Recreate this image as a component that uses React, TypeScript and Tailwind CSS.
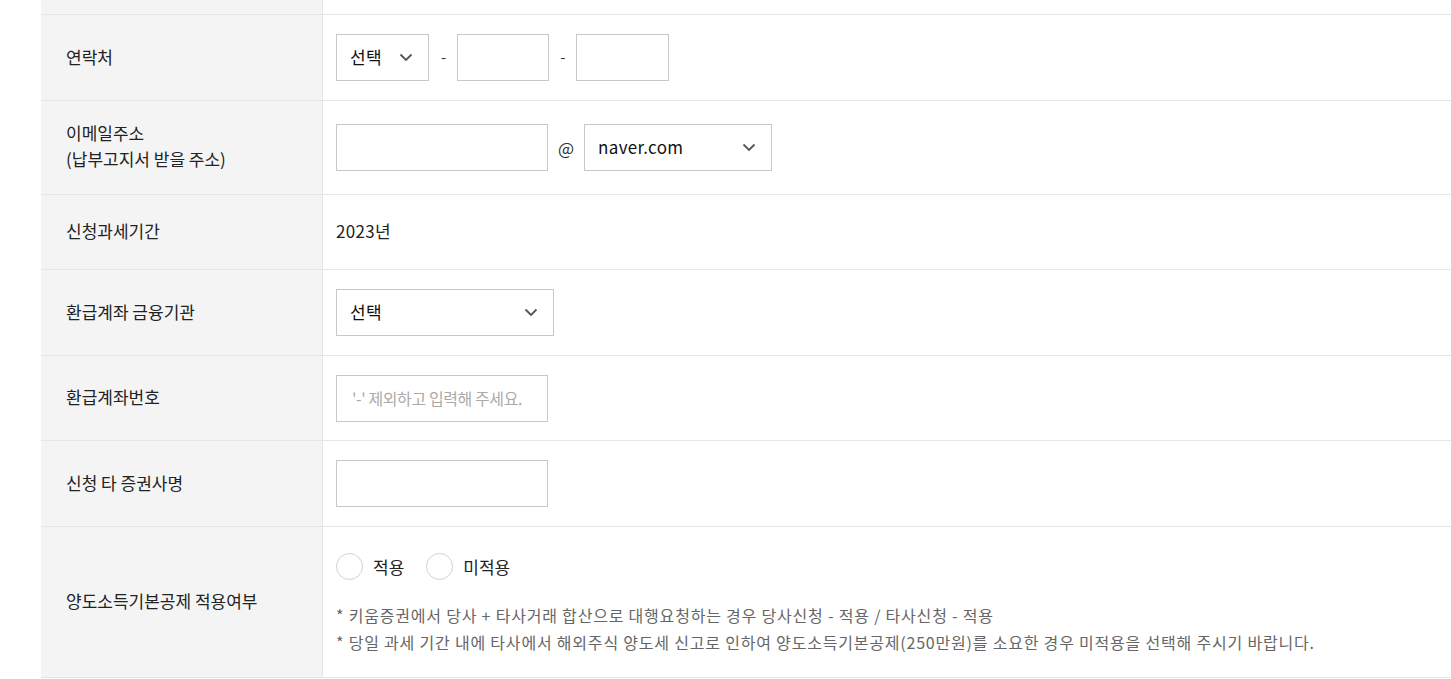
import { ReactNode } from "react";

const font = {
  fontFamily: '"Noto Sans CJK KR", "Noto Sans", sans-serif',
};

function Chevron() {
  return (
    <svg width="14" height="9" viewBox="0 0 14 9" fill="none">
      <path d="M1.5 1.5L7 7L12.5 1.5" stroke="#555" strokeWidth="1.8" />
    </svg>
  );
}

function Select({ label, width }: { label: string; width: string }) {
  return (
    <div
      className={`${width} h-[47px] border border-[#c8c8c8] bg-white flex items-center justify-between pl-[13px] pr-[15px] text-[17px] text-[#111] tracking-[0.3px]`}
    >
      <span className="mb-[2px]">{label}</span>
      <Chevron />
    </div>
  );
}

function Input({ width, placeholder }: { width: string; placeholder?: string }) {
  return (
    <div
      className={`${width} h-[47px] border border-[#c8c8c8] bg-white flex items-center px-[15px] text-[16px] text-[#aaa] tracking-[-0.4px]`}
    >
      {placeholder}
    </div>
  );
}

function Row({
  label,
  children,
  height,
}: {
  label: ReactNode;
  children?: ReactNode;
  height: string;
}) {
  return (
    <div className={`flex ${height} border-b border-[#e6e6e6]`}>
      <div className="w-[282px] shrink-0 bg-[#f4f4f4] border-r border-[#e6e6e6] flex items-center pl-[25px] pb-[3px] text-[17px] text-[#222] leading-[27px]">
        {label}
      </div>
      <div className="flex-1 flex items-center pl-[13px]">{children}</div>
    </div>
  );
}

function Radio({ label }: { label: string }) {
  return (
    <div className="flex items-center">
      <div className="w-[27px] h-[27px] rounded-full border border-[#d2d2d2] bg-white" />
      <span className="ml-[10px] text-[17px] text-[#222]">{label}</span>
    </div>
  );
}

export default function App() {
  return (
    <div className="w-[1451px] h-[679px] bg-white overflow-hidden" style={font}>
      <div className="ml-[41px]">
        <Row label="" height="h-[15px]" />

        <Row label="연락처" height="h-[86px]">
          <Select label="선택" width="w-[93px]" />
          <span className="ml-[12px] mr-[11px] text-[15px] text-[#333]">-</span>
          <Input width="w-[92px]" />
          <span className="mx-[11px] text-[15px] text-[#333]">-</span>
          <Input width="w-[93px]" />
        </Row>

        <Row
          label={
            <div className="leading-[26px]">
              <div>이메일주소</div>
              <div>(납부고지서 받을 주소)</div>
            </div>
          }
          height="h-[94px]"
        >
          <Input width="w-[212px]" />
          <span className="mx-[10px] text-[17px] text-[#333]">@</span>
          <Select label="naver.com" width="w-[188px]" />
        </Row>

        <Row label="신청과세기간" height="h-[75px]">
          <span className="mb-[3px] text-[17px] text-[#222] tracking-[0.3px]">2023년</span>
        </Row>

        <Row label="환급계좌 금융기관" height="h-[86px]">
          <Select label="선택" width="w-[218px]" />
        </Row>

        <Row label="환급계좌번호" height="h-[85px]">
          <Input width="w-[212px]" placeholder="'-' 제외하고 입력해 주세요." />
        </Row>

        <Row label="신청 타 증권사명" height="h-[86px]">
          <Input width="w-[212px]" />
        </Row>

        <div className="flex h-[151px] border-b border-[#e6e6e6]">
          <div className="w-[282px] shrink-0 bg-[#f4f4f4] border-r border-[#e6e6e6] flex items-center pl-[25px] pb-[3px] text-[17px] text-[#222]">
            양도소득기본공제 적용여부
          </div>
          <div className="flex-1 pl-[13px] pt-[26px]">
            <div className="flex items-center gap-[22px]">
              <Radio label="적용" />
              <Radio label="미적용" />
            </div>
            <div className="mt-[22px] text-[16px] text-[#666] leading-[27px] tracking-[0.8px]">
              <p>* 키움증권에서 당사 + 타사거래 합산으로 대행요청하는 경우 당사신청 - 적용 / 타사신청 - 적용</p>
              <p>
                * 당일 과세 기간 내에 타사에서 해외주식 양도세 신고로 인하여 양도소득기본공제(250만원)를 소요한 경우 미적용을 선택해 주시기 바랍니다.
              </p>
            </div>
          </div>
        </div>
      </div>
    </div>
  );
}
